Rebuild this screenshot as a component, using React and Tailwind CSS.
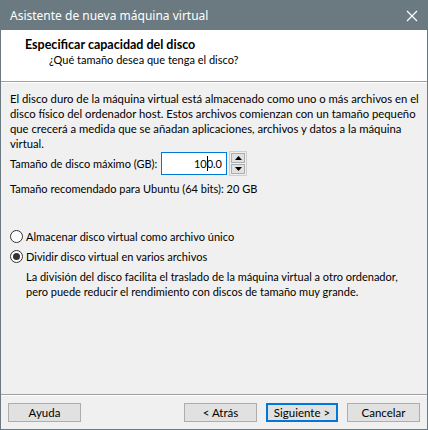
import React from 'react';

const bodyFont = { fontFamily: 'Lato, "Noto Sans", "Liberation Sans", sans-serif' };

function WinButton({ label, primary }) {
  return (
    <button
      className={
        primary
          ? 'h-[19px] w-[72px] bg-[#e1e1e1] border-2 border-[#0078d7] text-[11.5px] text-black leading-none'
          : 'h-[19px] w-[73px] bg-[#e1e1e1] border border-[#adadad] text-[11.5px] text-black leading-none'
      }
    >
      {label}
    </button>
  );
}

function Radio({ checked, label }) {
  return (
    <div className="flex items-center gap-[3px] h-[19px]">
      <span className="w-[13px] h-[13px] rounded-full border border-[#333] bg-white flex items-center justify-center">
        {checked && <span className="w-[7px] h-[7px] rounded-full bg-[#333]"></span>}
      </span>
      <span>{label}</span>
    </div>
  );
}

function Spinner() {
  return (
    <div className="flex items-center">
      <div className="w-[66px] h-[23px] border border-[#0078d7] bg-white flex items-center justify-end pr-[4px]">
        <span>10</span>
        <span className="w-px h-[15px] bg-black -mr-px"></span>
        <span>0.0</span>
      </div>
      <div className="ml-[2px] h-[25px] w-[18px] border border-[#cfcfcf] flex flex-col gap-px p-px">
        <div className="flex-1 bg-[#e1e1e1] border border-[#adadad] flex items-center justify-center">
          <svg width="7" height="4" viewBox="0 0 7 4"><path d="M3.5 0 L7 4 L0 4 Z" fill="#000" /></svg>
        </div>
        <div className="flex-1 bg-[#e1e1e1] border border-[#adadad] flex items-center justify-center">
          <svg width="7" height="4" viewBox="0 0 7 4"><path d="M0 0 L7 0 L3.5 4 Z" fill="#000" /></svg>
        </div>
      </div>
    </div>
  );
}

export default function App() {
  return (
    <div
      className="w-[428px] h-[430px] bg-[#f0f0f0] border border-[#6b7a80] flex flex-col text-[11px] text-black leading-[15px]"
      style={bodyFont}
    >
      {/* title bar */}
      <div
        className="h-[29px] bg-[#6b7a80] flex items-center justify-between pl-[9px] pr-[9px] text-white text-[12px]"
        style={{ fontFamily: '"Noto Sans", sans-serif' }}
      >
        <span>Asistente de nueva máquina virtual</span>
        <svg width="12" height="12" viewBox="0 0 12 12">
          <path d="M1 1 L11 11 M11 1 L1 11" stroke="#fff" strokeWidth="1.2" />
        </svg>
      </div>

      {/* header */}
      <div className="h-[52px] bg-white border-b border-[#a0a0a0] flex flex-col pt-[7px]">
        <div className="pl-[24px] font-bold text-[12.5px]">Especificar capacidad del disco</div>
        <div className="pl-[48px]">¿Qué tamaño desea que tenga el disco?</div>
      </div>
      <div className="h-px bg-white"></div>

      {/* body */}
      <div className="flex-1 flex flex-col px-[9px] pt-[8px] whitespace-nowrap">
        <p className="text-[11.3px]">
          El disco duro de la máquina virtual está almacenado como uno o más archivos en el
          <br />
          disco físico del ordenador host. Estos archivos comienzan con un tamaño pequeño
          <br />
          que crecerá a medida que se añadan aplicaciones, archivos y datos a la máquina
          <br />
          virtual.
        </p>
        <div className="flex items-center">
          <span className="w-[151px]">Tamaño de disco máximo (GB):</span>
          <Spinner />
        </div>
        <div className="mt-[5px]">Tamaño recomendado para Ubuntu (64 bits): 20 GB</div>

        <div className="mt-[31px] flex flex-col gap-px">
          <Radio label="Almacenar disco virtual como archivo único" />
          <Radio checked label="Dividir disco virtual en varios archivos" />
        </div>
        <p className="pl-[16px] mt-[3px]">
          La división del disco facilita el traslado de la máquina virtual a otro ordenador,
          <br />
          pero puede reducir el rendimiento con discos de tamaño muy grande.
        </p>
      </div>

      {/* footer */}
      <div className="border-t border-[#a0a0a0]">
        <div className="border-t border-white h-[34px] flex items-start pt-[7px] px-[7px]">
          <WinButton label="Ayuda" />
          <div className="flex-1"></div>
          <div className="flex gap-[9px]">
            <WinButton label="< Atrás" />
            <WinButton label="Siguiente >" primary />
            <WinButton label="Cancelar" />
          </div>
        </div>
      </div>
    </div>
  );
}
